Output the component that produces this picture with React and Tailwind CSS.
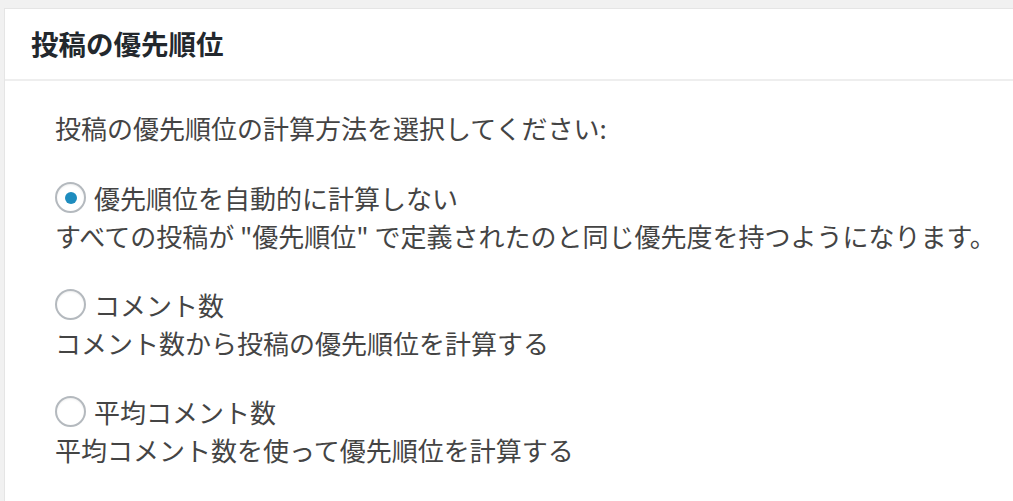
import React, { useState } from 'react';

const options = [
  { id: 'none', label: '優先順位を自動的に計算しない', desc: 'すべての投稿が "優先順位" で定義されたのと同じ優先度を持つようになります。' },
  { id: 'comments', label: 'コメント数', desc: 'コメント数から投稿の優先順位を計算する' },
  { id: 'avg', label: '平均コメント数', desc: '平均コメント数を使って優先順位を計算する' },
];

export default function App() {
  const [value, setValue] = useState('none');

  return (
    <div className="h-[501px] bg-[#f1f1f1] pt-2 pl-1 overflow-hidden" style={{ fontFamily: '"Noto Sans CJK JP", "Noto Sans", sans-serif' }}>
      <div className="bg-white border border-[#e5e5e5] border-r-0 w-[1100px] min-h-[520px]">
        <div className="h-[72px] flex items-center pl-[26px] border-b-2 border-[#eeeeee]">
          <h2 className="text-[27.5px] font-bold text-[#23282d] leading-none">投稿の優先順位</h2>
        </div>
        <div className="pl-[50px] pt-[27px] text-[#444444] text-[26px] leading-[39px]">
          <p className="mb-[31px]">投稿の優先順位の計算方法を選択してください:</p>
          <div className="flex flex-col gap-[30px]">
            {options.map((o) => (
              <label key={o.id} className="block cursor-pointer">
                <span className="flex items-center gap-[8px]">
                  <span className="w-[31px] h-[31px] rounded-full border-2 border-[#b4b9be] bg-white flex items-center justify-center shadow-[inset_0_1px_2px_rgba(0,0,0,0.07)]">
                    {value === o.id && <span className="w-[12px] h-[12px] rounded-full bg-[#1e8cbe]" />}
                  </span>
                  <input type="radio" name="prio" className="hidden" checked={value === o.id} onChange={() => setValue(o.id)} />
                  <span>{o.label}</span>
                </span>
                <span className="block -mt-[1px]">{o.desc}</span>
              </label>
            ))}
          </div>
        </div>
      </div>
    </div>
  );
}
